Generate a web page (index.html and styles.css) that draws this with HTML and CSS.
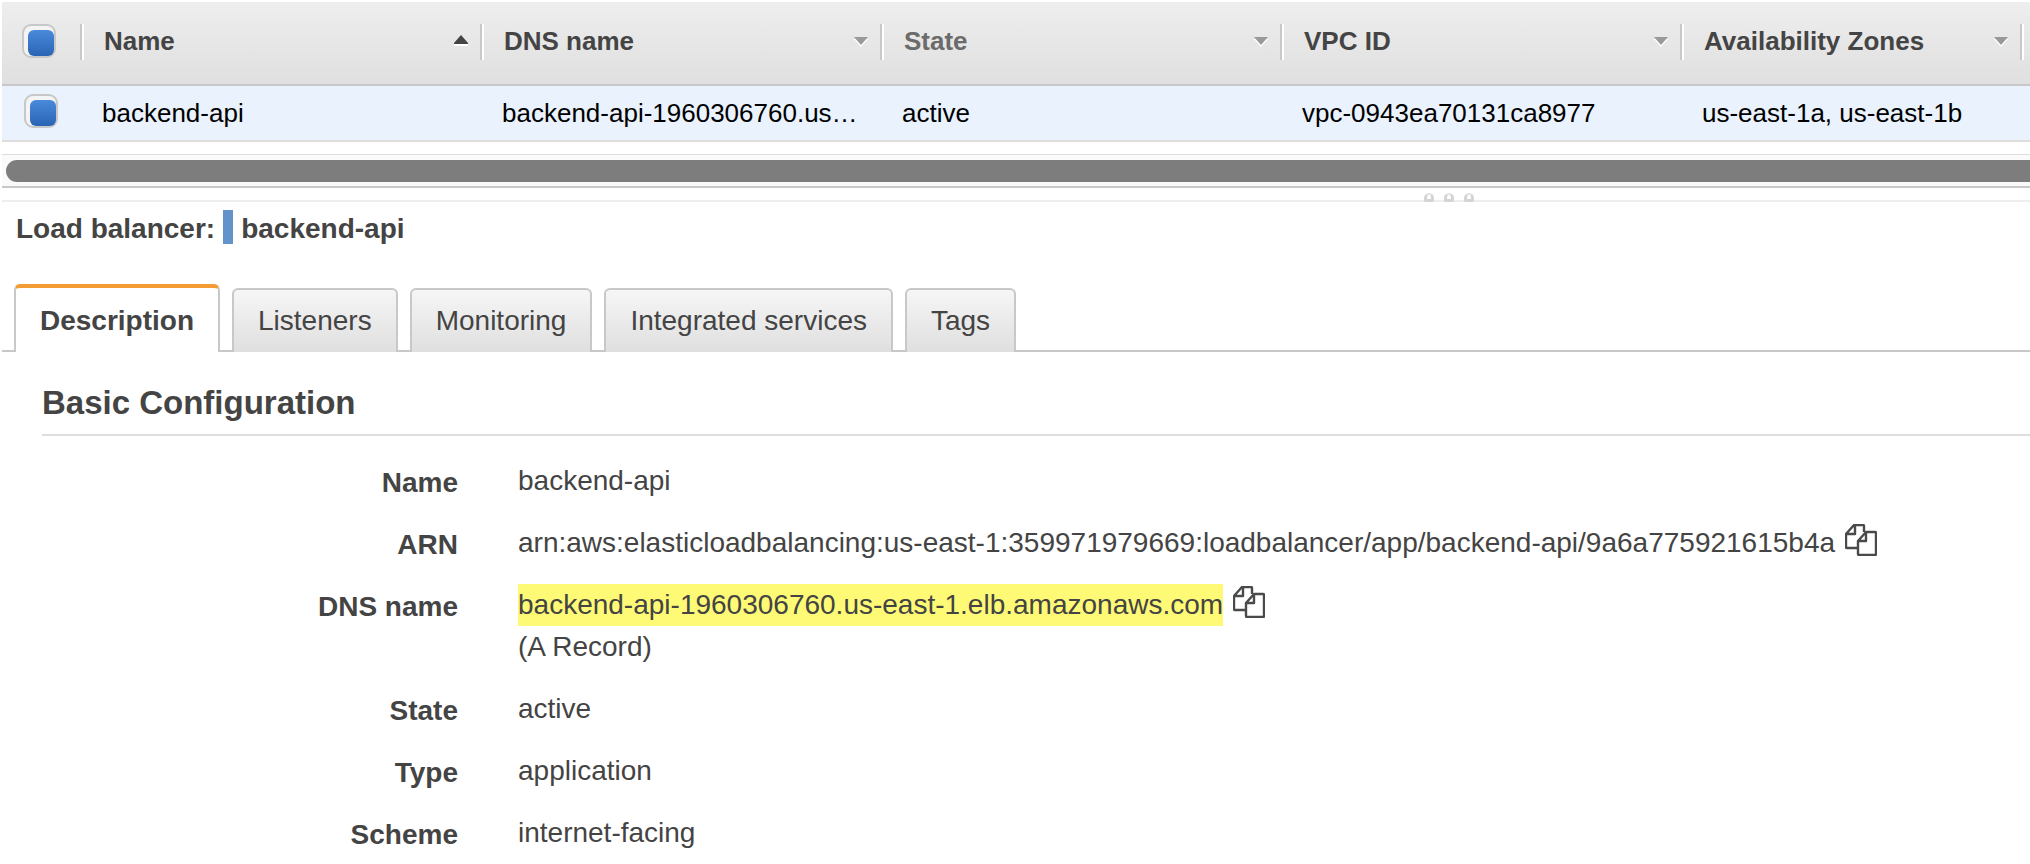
FILE: index.html
```html
<!DOCTYPE html>
<html lang="en">
<head>
<meta charset="utf-8">
<title>Load balancers</title>
<link rel="stylesheet" href="styles.css">
</head>
<body>
<svg class="sprite" aria-hidden="true">
  <symbol id="copy" viewBox="0 0 32 32">
    <path d="M12 24H2Q1 24 1 23V10L9 1H18Q19 1 19 2V8M1 10H10V1M13 17L21 8H30Q31 8 31 9V30Q31 31 30 31H14Q13 31 13 30V17H21V8" fill="none" stroke="#4a4a4a" stroke-width="2.4" stroke-linejoin="round"/>
  </symbol>
</svg>

<div class="grid-panel">
  <table class="grid">
    <colgroup>
      <col class="col-check"><col><col><col><col><col class="col-zones"><col class="col-rest">
    </colgroup>
    <thead>
      <tr>
        <th><input class="check" type="checkbox" aria-label="Select all" checked></th>
        <th><div class="head">Name<svg class="sort" viewBox="0 0 16 12"><path d="M1 9H15V11H1Z" fill="#fff"/><path d="M1 8L8 0L15 8V9H1Z" fill="#444"/></svg></div></th>
        <th><div class="head">DNS name<svg class="sort" viewBox="0 0 16 12"><path d="M1 4L8 12L15 4Z" fill="#fff"/><path d="M1 2L8 10L15 2Z" fill="#999"/></svg></div></th>
        <th><div class="head muted">State<svg class="sort" viewBox="0 0 16 12"><path d="M1 4L8 12L15 4Z" fill="#fff"/><path d="M1 2L8 10L15 2Z" fill="#999"/></svg></div></th>
        <th><div class="head">VPC ID<svg class="sort" viewBox="0 0 16 12"><path d="M1 4L8 12L15 4Z" fill="#fff"/><path d="M1 2L8 10L15 2Z" fill="#999"/></svg></div></th>
        <th><div class="head">Availability Zones<svg class="sort" viewBox="0 0 16 12"><path d="M1 4L8 12L15 4Z" fill="#fff"/><path d="M1 2L8 10L15 2Z" fill="#999"/></svg></div></th>
        <th><div class="head"></div></th>
      </tr>
    </thead>
    <tbody>
      <tr>
        <td class="cell-check"><input class="check" type="checkbox" aria-label="Select backend-api" checked></td>
        <td>backend-api</td>
        <td>backend-api-1960306760.us…</td>
        <td>active</td>
        <td>vpc-0943ea70131ca8977</td>
        <td>us-east-1a, us-east-1b</td>
        <td></td>
      </tr>
    </tbody>
  </table>
  <div class="track"><div class="thumb"></div></div>
</div>

<div class="splitter"><i class="dot"></i><i class="dot"></i><i class="dot"></i></div>

<main class="detail">
  <div class="title"><span>Load balancer:</span><span class="bar"></span><span>backend-api</span></div>

  <div class="tabs" role="tablist">
    <button class="tab active" role="tab" aria-selected="true">Description</button>
    <button class="tab" role="tab">Listeners</button>
    <button class="tab" role="tab">Monitoring</button>
    <button class="tab" role="tab">Integrated services</button>
    <button class="tab" role="tab">Tags</button>
  </div>

  <section class="config">
    <h2>Basic Configuration</h2>
    <dl class="fields">
      <dt>Name</dt>
      <dd>backend-api</dd>
      <dt>ARN</dt>
      <dd><div class="copyable"><span>arn:aws:elasticloadbalancing:us-east-1:359971979669:loadbalancer/app/backend-api/9a6a775921615b4a</span><button class="copy" aria-label="Copy ARN"><svg><use href="#copy"/></svg></button></div></dd>
      <dt>DNS name</dt>
      <dd><div class="copyable"><mark>backend-api-1960306760.us-east-1.elb.amazonaws.com</mark><button class="copy" aria-label="Copy DNS name"><svg><use href="#copy"/></svg></button></div>(A Record)</dd>
      <dt>State</dt>
      <dd>active</dd>
      <dt>Type</dt>
      <dd>application</dd>
      <dt>Scheme</dt>
      <dd>internet-facing</dd>
    </dl>
  </section>
</main>
</body>
</html>
```
FILE: styles.css
```css
* { box-sizing: border-box; }

body {
  margin: 0;
  padding: 2px 0 0 2px;
  background: #fff;
  color: #444;
  font: 28px/42px "Liberation Sans", Arial, sans-serif;
}

.sprite { display: none; }

/* results grid */
.grid {
  width: 100%;
  table-layout: fixed;
  border-collapse: separate;
  border-spacing: 0;
  font-size: 26px;
}
.col-check { width: 78px; }
.col-zones { width: 340px; }
.col-rest { width: 10px; }

.grid thead tr { background: linear-gradient(#eee, #dfdfdf); }
.grid th {
  height: 84px;
  padding: 22px 0 24px;
  border-bottom: 2px solid #c8c8c8;
  text-align: left;
  vertical-align: top;
  line-height: 34px;
}
.grid th:first-child { padding-left: 20px; }

.head {
  display: flex;
  align-items: center;
  justify-content: space-between;
  height: 36px;
  padding: 0 11px 2px 22px;
  border-left: 2px solid #c8c8c8;
  box-shadow: inset 2px 0 #fff;
}
.muted { color: #6b6b6b; }
.sort { flex: none; width: 16px; height: 12px; }

.grid td {
  height: 56px;
  padding: 0 22px;
  border-bottom: 2px solid #e0dcdc;
  background: #e9f2fd;
  color: #000;
  line-height: 54px;
  white-space: nowrap;
}
.grid td:last-child { padding: 0; }
.grid .cell-check { padding: 8px 0 0 22px; vertical-align: top; }

.check {
  display: block;
  appearance: none;
  width: 34px;
  height: 34px;
  margin: 0;
  padding: 4px 0 0 4px;
  border: 2px solid #c8c8c8;
  border-radius: 9px;
  background: #f4f4f4;
}
.check:checked::before {
  content: "";
  display: block;
  width: 26px;
  height: 26px;
  border-radius: 6px;
  background: linear-gradient(#4a8adb, #2a64b4);
}

.track {
  margin-top: 12px;
  padding: 5px 0 4px 4px;
  border-top: 1px solid #ddd;
  border-bottom: 2px solid #c8c8c8;
  background: #fafafa;
}
.thumb {
  height: 22px;
  border-radius: 11px 0 0 11px;
  background: #7d7d7d;
}

/* splitter between grid and detail pane */
.splitter {
  display: flex;
  align-items: flex-end;
  gap: 10px;
  height: 14px;
  padding-left: calc(70% + 2px);
  box-shadow: inset 0 -2px #eee;
}
.dot {
  width: 10px;
  height: 9px;
  border: 3px solid #d4d4d4;
  border-top: 2px solid #e4e4e4;
  border-radius: 5px 5px 2px 2px;
  background: #fff;
}

/* detail pane */
.title {
  display: flex;
  align-items: flex-start;
  gap: 8px;
  margin: 8px 0 36px;
  padding-left: 14px;
  font-weight: bold;
  line-height: 38px;
}
.bar { width: 10px; height: 34px; background: #6293cb; }

.tabs {
  display: flex;
  align-items: flex-end;
  gap: 12px;
  padding-left: 12px;
  border-bottom: 2px solid #c8c8c8;
}
.tab {
  height: 64px;
  margin: 0 0 -2px;
  padding: 0 24px;
  border: 2px solid #c8c8c8;
  border-bottom: 0;
  border-radius: 6px 6px 0 0;
  background: linear-gradient(#f6f6f6, #dfdfdf);
  color: #444;
  font: inherit;
}
.tab.active {
  height: 68px;
  padding-top: 2px;
  border-top: 4px solid #f39c34;
  background: #fff;
  font-weight: bold;
}

.config { padding-left: 40px; }
h2 {
  margin: 30px 0 24px;
  padding-bottom: 10px;
  border-bottom: 2px solid #ddd;
  font-size: 33px;
  line-height: 42px;
}

.fields {
  display: grid;
  grid-template-columns: 416px 1fr;
  gap: 20px 60px;
  margin: 0;
}
.fields dt { padding-top: 2px; margin-bottom: -2px; font-weight: bold; text-align: right; }
.fields dd { margin: 0; }
mark { background: #fffa75; color: inherit; }
.copyable { display: flex; gap: 10px; }
.copy {
  height: 34px;
  padding: 2px 0 0;
  border: 0;
  background: none;
}
.copy svg { display: block; width: 32px; height: 32px; }
```
